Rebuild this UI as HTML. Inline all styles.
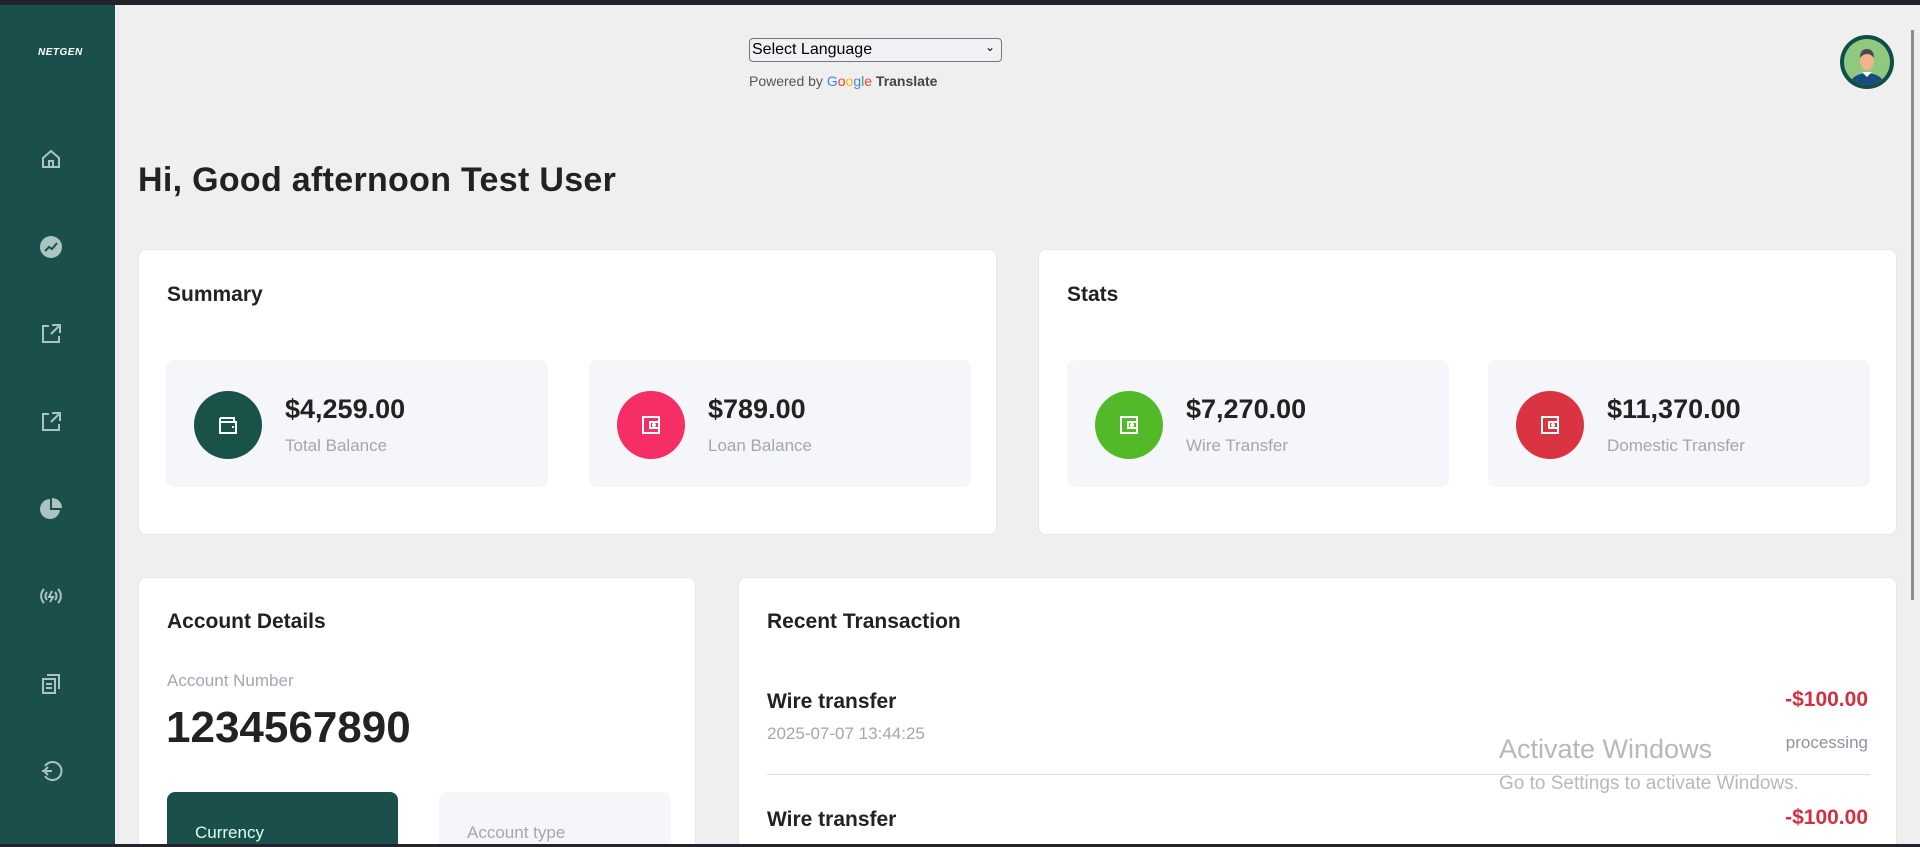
<!DOCTYPE html>
<html style="width:1920px;height:847px;overflow:hidden"><head><meta charset="utf-8"><style>
*{box-sizing:border-box;margin:0;padding:0}
body{width:1920px;height:847px;overflow:hidden;background:#efefef;font-family:"Liberation Sans",sans-serif;color:#1f1f1f;position:relative}
.top{position:absolute;left:0;top:0;width:1920px;height:5px;background:#22232b;z-index:5}
.bot{position:absolute;left:0;top:844px;width:1920px;height:3px;background:#22232b;z-index:5}
.side{position:absolute;left:0;top:5px;width:115px;height:839px;background:#1b4f4c}
.logo{position:absolute;left:38px;top:42px;color:#fff;font-size:10px;font-weight:bold;font-style:italic;letter-spacing:.5px}
.ic{position:absolute;left:39px;width:24px;height:24px}
.abs{position:absolute}
.card{position:absolute;background:#fff;border-radius:8px;border:1px solid #e6e6e6;overflow:hidden}
.box{position:absolute;background:#f5f6fa;border-radius:8px;width:382px;height:127px}
.circ{position:absolute;left:28px;top:31px;width:68px;height:68px;border-radius:50%}
.amt{position:absolute;left:119px;top:34px;font-size:27px;font-weight:bold;color:#222}
.lbl{position:absolute;left:119px;top:76px;font-size:17px;color:#a3a6b4}
h3{font-size:21px;font-weight:bold;color:#222;position:absolute}
</style></head><body>
<div class="top"></div>
<div class="side">
<div class="logo">NETGEN</div>
<svg class="ic" style="top:142px" viewBox="0 0 24 24" fill="none" stroke="#a9c4c1" stroke-width="2"><path d="M4 11l8-7 8 7v9H4z M10 20v-6h4v6"/></svg>
<svg class="ic" style="top:230px" viewBox="0 0 24 24"><circle cx="12" cy="12" r="11" fill="#a9c4c1"/><path d="M6 16l4-4 3 2 5-6" stroke="#1b4f4c" stroke-width="2" fill="none"/></svg>
<svg class="ic" style="top:317px" viewBox="0 0 24 24" fill="none" stroke="#a9c4c1" stroke-width="2"><path d="M10 4H4v16h16v-6M13 3h8v8M21 3l-9 9"/></svg>
<svg class="ic" style="top:405px" viewBox="0 0 24 24" fill="none" stroke="#a9c4c1" stroke-width="2"><path d="M10 4H4v16h16v-6M13 3h8v8M21 3l-9 9"/></svg>
<svg class="ic" style="top:492px" viewBox="0 0 24 24" fill="#a9c4c1"><path d="M11 2a10 10 0 1 0 10 11H11z"/><path d="M13 1v10h10A10 10 0 0 0 13 1z"/></svg>
<svg class="ic" style="top:579px" viewBox="0 0 24 24" fill="none" stroke="#a9c4c1" stroke-width="2"><path d="M5 5a10 10 0 0 0 0 14M19 5a10 10 0 0 1 0 14M8 8a6 6 0 0 0 0 8M16 8a6 6 0 0 1 0 8M13 7l-3 6h4l-3 5"/></svg>
<svg class="ic" style="top:667px" viewBox="0 0 24 24" fill="none" stroke="#a9c4c1" stroke-width="2"><path d="M8 3h12v14M4 7h12v14H4zM7 12h6M7 16h6"/></svg>
<svg class="ic" style="top:754px" viewBox="0 0 24 24" fill="none" stroke="#a9c4c1" stroke-width="2"><path d="M6 7a9 9 0 1 1 0 10M3 12h10M9 8l-4 4 4 4"/></svg>
</div>
<div class="abs" style="left:749px;top:38px;width:253px;height:24px;border:1px solid #777;border-radius:4px;background:#f2f0f4;font-size:16px;padding:2px 2px;color:#000">Select Language<span style="position:absolute;right:6px;top:1px;font-size:12px">&#8964;</span></div>
<div class="abs" style="left:749px;top:73px;font-size:14px;color:#555">Powered by <span style="color:#4285f4">G</span><span style="color:#ea4335">o</span><span style="color:#fbbc05">o</span><span style="color:#4285f4">g</span><span style="color:#34a853">l</span><span style="color:#ea4335">e</span> <b style="color:#444">Translate</b></div>
<svg class="abs" style="left:1839px;top:34px" width="56" height="56" viewBox="0 0 56 56"><circle cx="28" cy="28" r="27" fill="#0f4f47"/><circle cx="28" cy="28" r="23" fill="#8ec97f"/><clipPath id="c"><circle cx="28" cy="28" r="23"/></clipPath><g clip-path="url(#c)"><path d="M10 52q2-12 18-13q16 1 18 13z" fill="#1a4b7e"/><path d="M23 38l5 5 5-5z" fill="#fff"/><ellipse cx="28" cy="27" rx="7" ry="9" fill="#f0b48c"/><path d="M21 24q0-9 7-9t7 9q-3-4-7-4t-7 4z" fill="#4a4a4a"/></g></svg>
<div class="abs" style="left:1911px;top:30px;width:3px;height:570px;background:#8c8c8c"></div>
<div class="abs" style="left:138px;top:161px;font-size:34px;font-weight:bold;color:#222;letter-spacing:0.3px">Hi, Good afternoon Test User</div>

<div class="card" style="left:138px;top:249px;width:859px;height:286px">
<h3 style="left:28px;top:33px">Summary</h3>
<div class="box" style="left:27px;top:110px"><div class="circ" style="background:#195248"><svg style="margin:22px" width="24" height="24" viewBox="0 0 24 24" fill="none" stroke="#fff" stroke-width="2"><path d="M4 5h14v4M4 5v15h16V9H4"/><path d="M16 14h2"/></svg></div><div class="amt">$4,259.00</div><div class="lbl">Total Balance</div></div>
<div class="box" style="left:450px;top:110px"><div class="circ" style="background:#f52e66"><svg style="margin:22px" width="24" height="24" viewBox="0 0 24 24" fill="none" stroke="#fff" stroke-width="2"><path d="M4 4h16v16H4zM11 9h9v6h-9z"/><circle cx="15" cy="12" r="1"/></svg></div><div class="amt">$789.00</div><div class="lbl">Loan Balance</div></div>
</div>

<div class="card" style="left:1038px;top:249px;width:859px;height:286px">
<h3 style="left:28px;top:33px">Stats</h3>
<div class="box" style="left:28px;top:110px"><div class="circ" style="background:#52b928"><svg style="margin:22px" width="24" height="24" viewBox="0 0 24 24" fill="none" stroke="#fff" stroke-width="2"><path d="M4 4h16v16H4zM11 9h9v6h-9z"/><circle cx="15" cy="12" r="1"/></svg></div><div class="amt">$7,270.00</div><div class="lbl">Wire Transfer</div></div>
<div class="box" style="left:449px;top:110px"><div class="circ" style="background:#da3342"><svg style="margin:22px" width="24" height="24" viewBox="0 0 24 24" fill="none" stroke="#fff" stroke-width="2"><path d="M4 4h16v16H4zM11 9h9v6h-9z"/><circle cx="15" cy="12" r="1"/></svg></div><div class="amt">$11,370.00</div><div class="lbl">Domestic Transfer</div></div>
</div>

<div class="card" style="left:138px;top:577px;width:558px;height:267px;border-bottom:none;border-radius:8px 8px 0 0">
<h3 style="left:28px;top:32px">Account Details</h3>
<div class="abs" style="left:28px;top:93px;font-size:17px;color:#a3a6b4">Account Number</div>
<div class="abs" style="left:27px;top:125px;font-size:44px;font-weight:bold;color:#222">1234567890</div>
<div class="abs" style="left:28px;top:214px;width:231px;height:53px;background:#1b4f4c;border-radius:8px 8px 0 0;color:#dfe;font-size:17px;padding:32px 28px 0;line-height:18px">Currency</div>
<div class="abs" style="left:300px;top:214px;width:232px;height:53px;background:#f5f6fa;border-radius:8px 8px 0 0;color:#a3a6b4;font-size:17px;padding:32px 28px 0;line-height:18px">Account type</div>
</div>

<div class="card" style="left:738px;top:577px;width:1159px;height:267px;border-bottom:none;border-radius:8px 8px 0 0">
<h3 style="left:28px;top:32px">Recent Transaction</h3>
<div class="abs" style="left:28px;top:112px;font-size:21px;font-weight:bold;color:#222">Wire transfer</div>
<div class="abs" style="left:28px;top:146px;font-size:17px;color:#a3a6b4">2025-07-07 13:44:25</div>
<div class="abs" style="right:28px;top:110px;font-size:21px;font-weight:bold;color:#d2303f">-$100.00</div>
<div class="abs" style="right:28px;top:155px;font-size:17px;color:#8f92a0">processing</div>
<div class="abs" style="left:28px;top:196px;width:1103px;height:1px;background:#ddd"></div>
<div class="abs" style="left:28px;top:230px;font-size:21px;font-weight:bold;color:#222;line-height:24px">Wire transfer</div>
<div class="abs" style="right:28px;top:228px;font-size:21px;font-weight:bold;color:#d2303f;line-height:24px">-$100.00</div>
</div>
<div class="abs" style="left:1499px;top:734px;font-size:27px;color:#b8b8b8">Activate Windows</div>
<div class="abs" style="left:1499px;top:773px;font-size:19px;color:#b8b8b8">Go to Settings to activate Windows.</div>
<div class="bot"></div>
</body></html>
